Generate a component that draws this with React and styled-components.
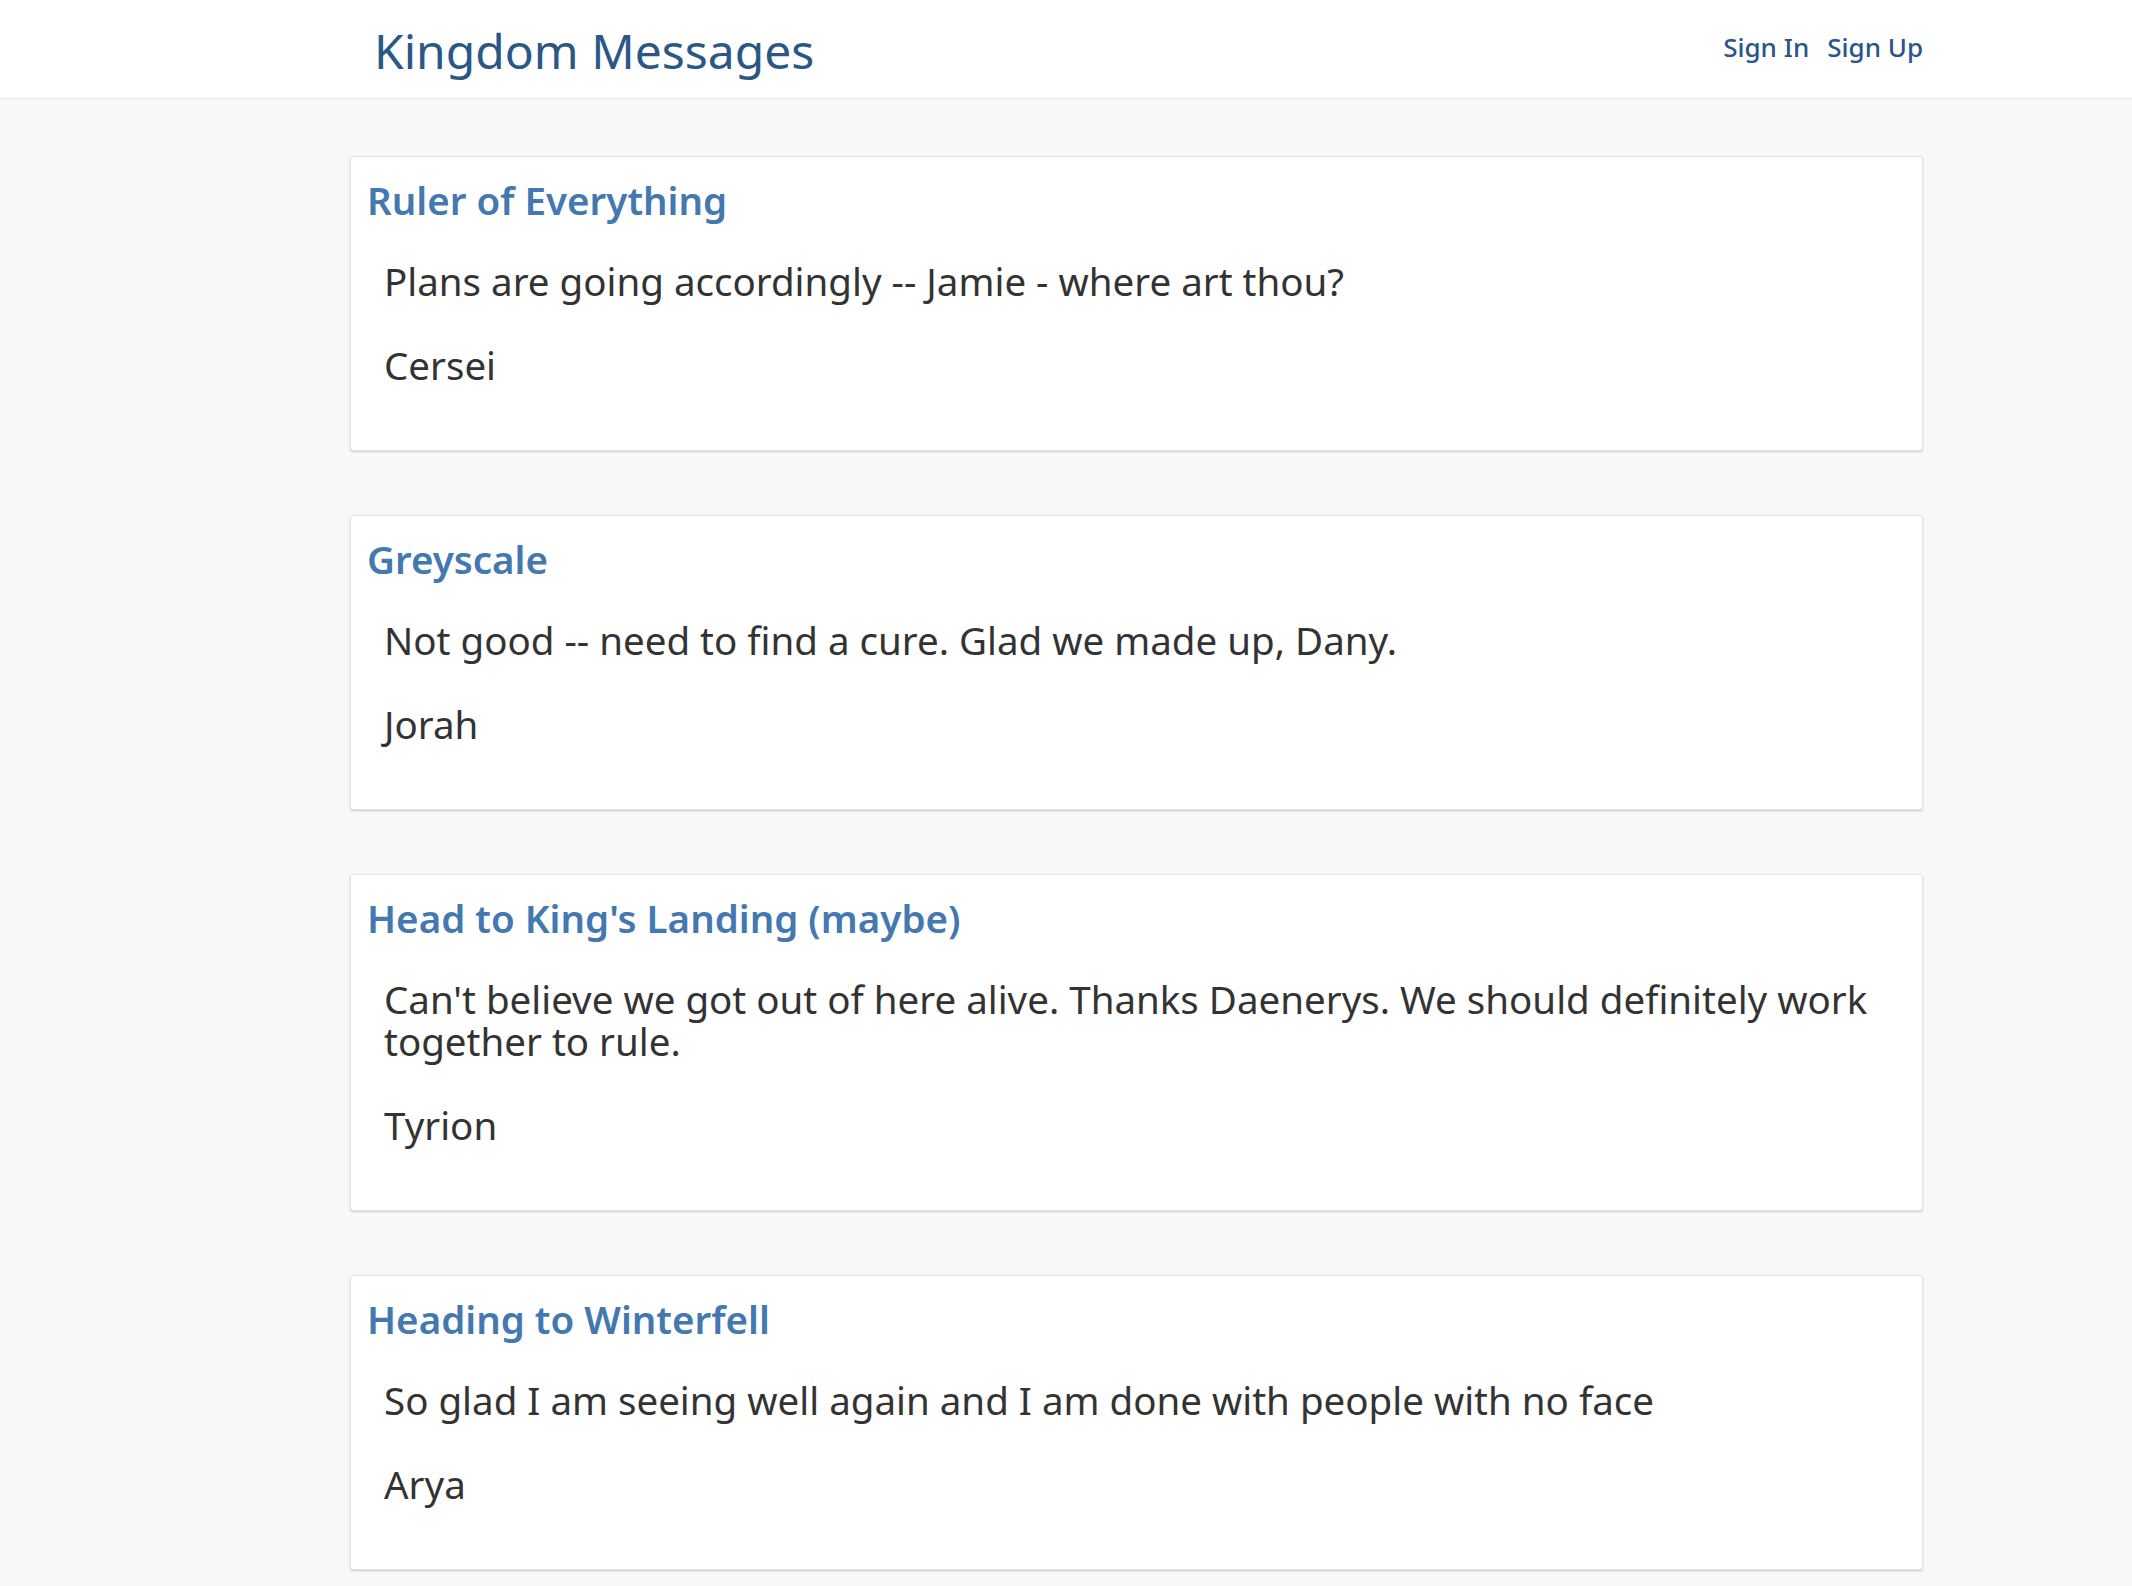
import React from 'react'
import styled, { createGlobalStyle } from 'styled-components'

const messages = [
  {
    id: 1,
    title: 'Ruler of Everything',
    text: 'Plans are going accordingly -- Jamie - where art thou?',
    author: 'Cersei',
  },
  {
    id: 2,
    title: 'Greyscale',
    text: 'Not good -- need to find a cure. Glad we made up, Dany.',
    author: 'Jorah',
  },
  {
    id: 3,
    title: "Head to King's Landing (maybe)",
    text: "Can't believe we got out of here alive. Thanks Daenerys. We should definitely work together to rule.",
    author: 'Tyrion',
  },
  {
    id: 4,
    title: 'Heading to Winterfell',
    text: 'So glad I am seeing well again and I am done with people with no face',
    author: 'Arya',
  },
]

function App() {
  return (
    <>
      <GlobalStyle />
      <Header>
        <HeaderInner>
          <Brand href="#">Kingdom Messages</Brand>
          <Nav>
            <NavLink href="#">Sign In</NavLink>
            <NavLink href="#">Sign Up</NavLink>
          </Nav>
        </HeaderInner>
      </Header>
      <Container>
        {messages.map((m) => (
          <Card key={m.id}>
            <CardTitle>{m.title}</CardTitle>
            <CardText>{m.text}</CardText>
            <CardText>{m.author}</CardText>
          </Card>
        ))}
      </Container>
    </>
  )
}

export default App

const GlobalStyle = createGlobalStyle`
  body {
    margin: 0;
    background: #f8f8f8;
    font-family: "Noto Sans", "Open Sans", sans-serif;
    color: #333;
  }
  a { text-decoration: none; }
`

const Header = styled.header`
  background: #fff;
  border-bottom: 1px solid #e7e7e7;
  height: 98px;
`

const HeaderInner = styled.div`
  width: 1573px;
  margin-left: 350px;
  display: flex;
  justify-content: space-between;
  align-items: flex-start;
`

const Brand = styled.a`
  margin-top: 18px;
  margin-left: 24px;
  font-size: 48px;
  color: #2a5785;
`

const Nav = styled.nav`
  display: flex;
  gap: 18px;
  margin-top: 29px;
`

const NavLink = styled.a`
  font-size: 26px;
  font-weight: 500;
  color: #28558a;
`

const Container = styled.main`
  width: 1573px;
  margin-left: 350px;
  padding-top: 57px;
  padding-bottom: 40px;
  display: flex;
  flex-direction: column;
  gap: 64px;
`

const Card = styled.section`
  background: #fff;
  border: 1px solid #e3e3e3;
  border-radius: 3px;
  box-shadow: 0 1px 2px rgba(0, 0, 0, 0.18);
  padding: 21px 32px 64px 16px;
`

const CardTitle = styled.h3`
  margin: 0 0 38px;
  font-size: 38.5px;
  line-height: 44px;
  font-weight: 600;
  color: #4378b0;
`

const CardText = styled.p`
  margin: 0 0 42px 17px;
  font-size: 38.5px;
  line-height: 42px;
  color: #333;

  &:last-child {
    margin-bottom: 0;
  }
`
